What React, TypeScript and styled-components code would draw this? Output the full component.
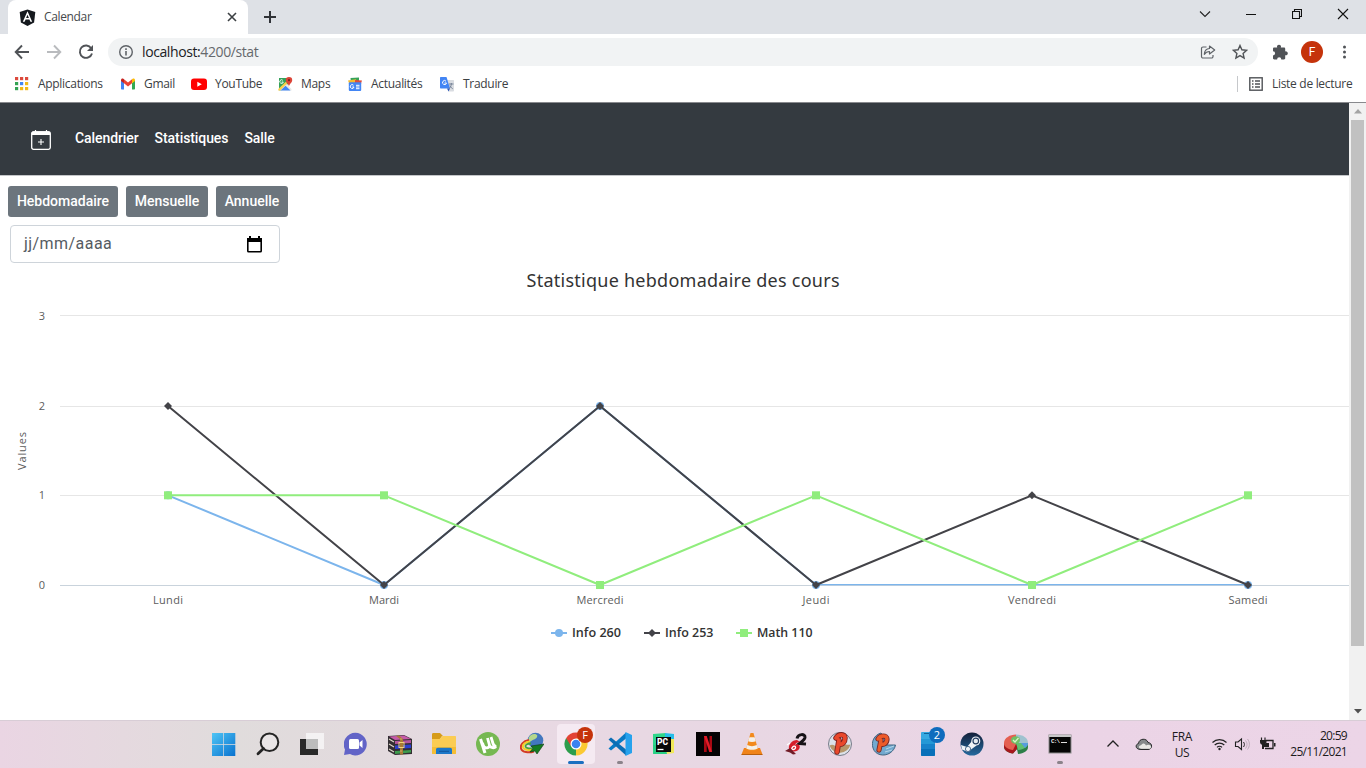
import React from 'react';
import styled, { createGlobalStyle } from 'styled-components';

const ui = "'Open Sans', 'Noto Sans', sans-serif";
const web = "Roboto, 'Liberation Sans', sans-serif";

const GlobalStyle = createGlobalStyle`
  * { box-sizing: border-box; }
  body { margin: 0; overflow: hidden; background: #fff; }
  svg { display: block; flex: none; }
`;

const Screen = styled.div`
  width: 1366px;
  height: 768px;
  display: flex;
  flex-direction: column;
  font-family: ${ui};
  overflow: hidden;
`;

/* ---------- browser chrome ---------- */

const TabStrip = styled.div`
  height: 34px;
  flex: none;
  display: flex;
  align-items: stretch;
  padding-left: 8px;
  background: #dee1e6;
`;
const Tab = styled.div`
  width: 240px;
  display: flex;
  align-items: center;
  padding: 0 11px;
  background: #fff;
  border-radius: 8px 8px 0 0;
`;
const TabTitle = styled.span`
  flex: 1;
  margin-left: 8px;
  padding-bottom: 1px;
  font-size: 12px;
  letter-spacing: -0.35px;
  color: #45484c;
`;
const NewTab = styled.div`
  display: flex;
  align-items: center;
  padding-left: 15px;
`;
const WindowButtons = styled.div`
  margin-left: auto;
  display: flex;
`;
const WindowButton = styled.div<{ $w: number }>`
  width: ${(p) => p.$w}px;
  height: 28px;
  display: flex;
  align-items: center;
  justify-content: center;
`;
const Toolbar = styled.div`
  height: 36px;
  flex: none;
  display: flex;
  align-items: center;
  padding: 0 13px 0 14px;
  background: #fff;
`;
const NavIcons = styled.div`
  display: flex;
  gap: 16px;
  width: 94px;
`;
const Omnibox = styled.div`
  width: 1150px;
  height: 28px;
  display: flex;
  align-items: center;
  padding: 0 10px;
  border-radius: 14px;
  background: #f1f3f4;
`;
const Url = styled.span`
  flex: 1;
  margin-left: 8px;
  padding-bottom: 1px;
  font-size: 14px;
  letter-spacing: -0.4px;
  color: #66696d;
  b { font-weight: 400; color: #202124; }
`;
const OmniActions = styled.div`
  display: flex;
  gap: 16px;
`;
const ToolbarEnd = styled.div`
  display: flex;
  align-items: center;
  margin-left: auto;
`;
const Avatar = styled.div`
  width: 22px;
  height: 22px;
  margin: 0 14px 0 13px;
  border-radius: 50%;
  background: #c5330b;
  color: #fff;
  font: 12px/22px ${web};
  text-align: center;
`;
const Bookmarks = styled.div`
  height: 33px;
  flex: none;
  display: flex;
  align-items: center;
  padding: 0 14px 4px 14px;
  background: #fff;
  border-bottom: 1px solid #88898d;
`;
const Bookmark = styled.div<{ $w: number }>`
  width: ${(p) => p.$w}px;
  display: flex;
  align-items: center;
  gap: 8px;
  white-space: nowrap;
  font-size: 12px;
  letter-spacing: -0.3px;
  color: #3c4043;
`;
const BookmarkName = styled.span`
  padding-bottom: 2px;
`;
const ReadingList = styled(Bookmark)`
  margin-left: auto;
  padding-left: 10px;
  height: 16px;
  border-left: 1px solid #c6c8cb;
`;

/* ---------- page ---------- */

const Viewport = styled.div`
  height: 617px;
  flex: none;
  display: flex;
`;
const Page = styled.main`
  width: 1349px;
  background: #fff;
  overflow: hidden;
  font-family: ${web};
`;
const Navbar = styled.nav`
  height: 73px;
  display: flex;
  align-items: center;
  gap: 16px;
  padding: 0 0 2px 31px;
  background: #343a40;
  border-bottom: 1px solid #c4c6c9;
`;
const Brand = styled.div`
  width: 28px;
  padding-top: 3px;
`;
const NavLink = styled.a`
  color: #fff;
  font-size: 14px;
  font-weight: 500;
  letter-spacing: -0.08px;
`;
const Buttons = styled.div`
  display: flex;
  gap: 8px;
  padding: 10px 8px 8px;
`;
const Button = styled.button<{ $w: number }>`
  width: ${(p) => p.$w}px;
  height: 31px;
  padding: 0 0 1px;
  border: 0;
  border-radius: 3px;
  background: #6c757d;
  color: #fff;
  font: 500 14px/29px ${web};
`;
const DateField = styled.div`
  width: 270px;
  height: 38px;
  margin-left: 10px;
  display: flex;
  align-items: center;
  justify-content: space-between;
  padding: 0 17px 0 13px;
  border: 1px solid #ced4da;
  border-radius: 4px;
`;
const DateText = styled.span`
  padding-bottom: 1px;
  font-size: 16px;
  letter-spacing: 0.45px;
  color: #555b62;
`;
const Scrollbar = styled.div`
  width: 17px;
  display: flex;
  flex-direction: column;
  align-items: center;
  background: #f1f1f1;
`;
const Arrow = styled.div`
  height: 17px;
  display: flex;
  align-items: center;
`;
const Thumb = styled.div`
  width: 13px;
  height: 526px;
  margin-bottom: auto;
  background: #c1c1c1;
`;

/* ---------- taskbar ---------- */

const Taskbar = styled.footer`
  height: 48px;
  flex: none;
  display: flex;
  padding-left: 202px;
  background: linear-gradient(90deg, #ead5e3 0%, #e5d9df 9%, #e0dcdc 17%, #e2dadd 26%, #e8d9e3 38%, #e8d7e3 55%, #ebd4e6 80%, #ecd5e7 100%);
  box-shadow: inset 0 1px #d8cdd6;
`;
const Task = styled.div<{ $active?: boolean }>`
  position: relative;
  width: 38px;
  height: 40px;
  margin: 4px 3px;
  display: flex;
  align-items: center;
  justify-content: center;
  border-radius: 4px;
  background: ${(p) => (p.$active ? '#f5eaf2' : 'transparent')};
`;
const Running = styled.i<{ $active?: boolean }>`
  position: absolute;
  left: 50%;
  bottom: 0;
  width: ${(p) => (p.$active ? 16 : 6)}px;
  height: 3px;
  transform: translateX(-50%);
  border-radius: 2px;
  background: ${(p) => (p.$active ? '#1a6fc0' : '#8b838a')};
`;
const Badge = styled.span<{ $bg: string }>`
  position: absolute;
  top: 3px;
  right: 2px;
  width: 16px;
  height: 16px;
  border-radius: 50%;
  background: ${(p) => p.$bg};
  color: #fff;
  font: 11px/16px ${ui};
  text-align: center;
`;
const Tray = styled.div`
  margin-left: auto;
  display: flex;
  align-items: center;
  padding-right: 19px;
  color: #1d1b1d;
`;
const Language = styled.div`
  width: 28px;
  margin-right: 16px;
  padding-top: 2px;
  text-align: center;
  font-size: 12px;
  line-height: 16px;
  letter-spacing: -0.3px;
`;
const Clock = styled.div`
  width: 71px;
  text-align: right;
  white-space: nowrap;
  font-size: 12px;
  line-height: 16px;
  letter-spacing: -0.7px;
`;

type IconProps = { w?: number; h?: number; box?: string; children: React.ReactNode };
const Icon = ({ w = 16, h = w, box = `0 0 ${w} ${h}`, children }: IconProps) => (
  <svg width={w} height={h} viewBox={box} fill="none">{children}</svg>
);

const AngularLogo = () => (
  <Icon w={17} h={17}>
    <path d="M8.5.4 16.3 3l-1.2 10.4-6.6 3.5-6.6-3.500L.7 3Z" fill="#15191e" />
    <path d="m8.500 2.300-4.700 10.500h1.800l1-2.400h3.800l1 2.400h1.800L8.500 2.300Zm0 3.400 1.400 3.300H7.100Z" fill="#fff" />
  </Icon>
);

const appColors = ['#dc4a3d', '#dc4a3d', '#dc4a3d', '#34a253', '#4285f4', '#f2b818', '#34a253', '#f2b818', '#f2b818'];

const AppsIcon = () => (
  <Icon w={16}>
    {appColors.map((c, i) => (
      <rect key={i} x={1 + (i % 3) * 5} y={1 + Math.floor(i / 3) * 5} width="3.2" height="3.2" fill={c} />
    ))}
  </Icon>
);
const GmailIcon = () => (
  <Icon w={16}>
    <path d="M1 4v8.500c0 .6.4 1 1 1h2V7Z" fill="#4285f4" />
    <path d="M15 4v8.500c0 .6-.4 1-1 1h-2V7Z" fill="#34a853" />
    <path d="M4 3.300 8 6.400l4-3.100v4L8 10.400 4 7.300Z" fill="#ea4335" />
    <path d="M1 4c0-1.500 1.600-2 2.600-1.100L4 3.300v4L1 5Z" fill="#c5221f" />
    <path d="M15 4c0-1.500-1.600-2-2.600-1.100l-.4.4v4L15 5Z" fill="#fbbc04" />
  </Icon>
);
const YouTubeIcon = () => (
  <Icon w={16}>
    <rect y="2.500" width="16" height="11.500" rx="3" fill="#f00" />
    <path d="m6.300 5.700 4.500 2.500-4.500 2.600Z" fill="#fff" />
  </Icon>
);
const MapsIcon = () => (
  <Icon w={16}>
    <path d="M2 2h10v5L4 14.500H2Z" fill="#34a15a" />
    <path d="m1.500 14 7-7 6 6v1.500h-13Z" fill="#e9e9e5" />
    <path d="m3.500 14.500 5-4.800 5 4.800Z" fill="#4285f4" />
    <path d="m1.300 13 7.500-7.300 1.500 1.500L3 14.500H1.300Z" fill="#fbd04a" />
    <path d="M5.800 4.300A1.800 1.800 0 1 0 6.300 6H4.700" stroke="#fff" strokeWidth=".9" />
    <path d="M12 1a3.200 3.200 0 0 1 3.200 3.300c0 2.300-2.500 3-3.200 6.200-.7-3.200-3.200-3.900-3.200-6.200A3.200 3.200 0 0 1 12 1Z" fill="#dc4437" />
    <circle cx="12" cy="4.200" r="1.100" fill="#7b211a" />
  </Icon>
);
const NewsIcon = () => (
  <Icon w={16}>
    <path d="m3.500 2 8.500-.5V7H4Z" fill="#36a35a" />
    <path d="m1 4.500 8-1.200.5 4H2Z" fill="#f5bb2d" />
    <path d="m8 4 7 .4L13.500 9H8Z" fill="#de4b3c" />
    <rect x="1.800" y="6.200" width="12.400" height="8.800" rx="1" fill="#4285f4" />
    <path d="M6.500 9.200A1.900 1.900 0 1 0 7 11H5.300M9 9.300h3.500M9 11h3.500M9 12.700h3.500" stroke="#fff" />
  </Icon>
);
const TranslateIcon = () => (
  <Icon w={16}>
    <path d="M7 4h7c.7 0 1 .3 1 1v9.500c0 .5-.4 1-1 1H9.500Z" fill="#d9dce1" />
    <path d="M2 1h5.500L11 12.500H2c-.6 0-1-.4-1-1V2c0-.6.4-1 1-1Z" fill="#4285f4" />
    <path d="M8 12.500h3l-1.500 3Z" fill="#2d57b8" />
    <path d="M7 5.200A2 2 0 1 0 7.500 7H5.500" stroke="#fff" />
    <path d="M10 8h4.500M12.300 7v1c0 2-1 3.500-2 4.500M10.800 9.500c.8 1.500 2 2.800 3 3.300" stroke="#64748c" strokeWidth=".8" />
  </Icon>
);

/* ---------- chart ---------- */

const days = ['Lundi', 'Mardi', 'Mercredi', 'Jeudi', 'Vendredi', 'Samedi'];
const dayWidths = [30, 30, 47, 27, 48, 39];
const levels = [585, 495.3, 406, 315.8];
const px = (i: number) => 168 + i * 216;

type Shape = 'circle' | 'diamond' | 'square';
type Series = { name: string; color: string; shape: Shape; data: number[]; x: number; w: number };
const series: Series[] = [
  { name: 'Info 260', color: '#7cb5ec', shape: 'circle', data: [1, 0, 2, 0, 0, 0], x: 559, w: 49 },
  { name: 'Info 253', color: '#434348', shape: 'diamond', data: [2, 0, 2, 0, 1, 0], x: 652, w: 48.5 },
  { name: 'Math 110', color: '#90ed7d', shape: 'square', data: [1, 1, 0, 1, 0, 1], x: 744, w: 55.5 },
];

const Marker = ({ x, y, shape, color }: { x: number; y: number; shape: Shape; color: string }) => {
  if (shape === 'circle') return <circle cx={x} cy={y} r="4" fill={color} />;
  if (shape === 'diamond') return <path d={`M${x} ${y - 4}l4 4-4 4-4-4Z`} fill={color} />;
  return <rect x={x - 4} y={y - 4} width="8" height="8" fill={color} />;
};

const ChartSvg = styled.svg`
  font-family: 'Open Sans', 'Noto Sans', sans-serif;
  font-size: 11px;
  fill: #5c5c5c;
`;

const Chart = () => (
  <ChartSvg width="1349" height="400" viewBox="0 263 1349 400">
    <defs>
      <clipPath id="plot"><rect x="60" y="300" width="1289" height="285.200" /></clipPath>
    </defs>
    <text x="526.500" y="287" fontSize="18" fill="#333" textLength="313" fontFamily="'Noto Sans', sans-serif">
      Statistique hebdomadaire des cours
    </text>
    {[585.5, 495.5, 406.5, 315.5].map((y, v) => (
      <g key={v}>
        <path d={`M60 ${y}H1349`} stroke={v ? '#e6e6e6' : '#c9d3dc'} />
        <text x="45" y={Math.floor(y) + (v === 3 ? 5 : 4)} textAnchor="end">{v}</text>
      </g>
    ))}
    <text transform="translate(26 470) rotate(-90)" textLength="38">Values</text>
    {days.map((d, i) => (
      <text key={d} x={px(i) - dayWidths[i] / 2} y="604" textLength={dayWidths[i]}>{d}</text>
    ))}
    {series.map((s) => (
      <g key={s.name}>
        <polyline
          points={s.data.map((v, i) => `${px(i)},${levels[v]}`).join(' ')}
          fill="none"
          stroke={s.color}
          strokeWidth="2"
          strokeLinejoin="round"
          clipPath="url(#plot)"
        />
        {s.data.map((v, i) => (
          <Marker key={i} x={px(i)} y={levels[v]} shape={s.shape} color={s.color} />
        ))}
        <path d={`M${s.x - 8} 633h16`} stroke={s.color} strokeWidth="2" />
        <Marker x={s.x} y={633} shape={s.shape} color={s.color} />
        <text x={s.x + 13} y="637" fontSize="12" fontWeight="600" fill="#333" textLength={s.w} lengthAdjust="spacingAndGlyphs">
          {s.name}
        </text>
      </g>
    ))}
  </ChartSvg>
);

/* ---------- taskbar drawings ---------- */

const WindowsIcon = () => (
  <Icon w={24}>
    <defs>
      <linearGradient id="win" x1="0" y1="0" x2="1" y2="1">
        <stop stopColor="#4fc5f5" />
        <stop offset="1" stopColor="#0872cf" />
      </linearGradient>
    </defs>
    <path d="M0 1h11.300v11H0ZM12 1h11.300v11H12ZM0 12.700h11.300V24H0ZM12 12.700h11.300V24H12Z" fill="url(#win)" />
  </Icon>
);
const SearchIcon = () => (
  <Icon w={24}>
    <circle cx="13.500" cy="10.200" r="8.800" fill="#e9e5e6" stroke="#242424" strokeWidth="2" />
    <path d="m7.500 16.500-5.500 5.300" stroke="#242424" strokeWidth="2.800" strokeLinecap="round" />
  </Icon>
);
const TaskViewIcon = () => (
  <Icon w={24}>
    <rect x="0" y="7" width="18" height="16" fill="#292929" />
    <rect x="6" y="1" width="18" height="16" fill="#f4f2f3" />
    <rect x="6" y="7" width="12" height="10" fill="#bcbcbc" />
  </Icon>
);
const ChatIcon = () => (
  <Icon w={24}>
    <path d="M11.500.800A11.300 11.300 0 1 1 6 22L0 23l1-5.500A11.500 11.500 0 0 1 11.500.800Z" fill="#6264c7" />
    <rect x="5" y="7" width="10" height="10" rx="1.500" fill="#fff" />
    <path d="m15.500 10.500 3-2.500v8l-3-2.500Z" fill="#fff" />
  </Icon>
);
const WinrarIcon = () => (
  <Icon w={26} h={24}>
    <path d="m1 4 16-1 8 4v15l-17 1-7-4Z" fill="#332e33" />
    <path d="m2 4.500 15-1 7 3.500-16 1Z" fill="#c55aa8" />
    <path d="M8 9l16-1v3L8 12Z" fill="#b5559d" />
    <path d="M8 13.500l16-1V16L8 17Z" fill="#2b3fd0" />
    <path d="M8 19l16-1v2.500L8 22Z" fill="#3d9b4d" />
    <path d="m2 7 5 3M2 12l5 3M2 17l5 3" stroke="#ddd7c8" strokeWidth="1.200" />
    <path d="M12 3.500 16 7v15.500h-3V7L9 4Z" fill="#a97b35" />
    <rect x="12" y="10.500" width="5" height="5" stroke="#f0d27b" />
    <path d="M13.500 7h2M13.500 19h2" stroke="#f0e3a6" strokeDasharray="1 1" />
  </Icon>
);
const FolderIcon = () => (
  <Icon w={24}>
    <path d="M0 2.500c0-1 .5-1.500 1.500-1.500H8l3 3h-1L8 7H0Z" fill="#d69b19" />
    <path d="M0 7h7.500l3-3H23c.7 0 1 .4 1 1v16c0 .6-.4 1-1 1H1c-.6 0-1-.4-1-1Z" fill="#fbcc53" />
    <path d="M0 15h24v6c0 .6-.4 1-1 1H1c-.6 0-1-.4-1-1Z" fill="#f5bd35" />
    <path d="M4 22v-4.500c0-1 .8-1.800 1.800-1.800h12.400c1 0 1.800.8 1.800 1.800V22Z" fill="#1c77c8" />
    <path d="M7 19.300h10" stroke="#12549b" />
  </Icon>
);
const TorrentIcon = () => (
  <Icon w={24}>
    <circle cx="12" cy="12" r="12" fill="#76b852" />
    <path d="m4.500 7 4.500 14" stroke="#fff" strokeWidth="3" />
    <path d="m6.500 11 .8 2.500c1.200 3.800 7 2.800 6-1L11.500 6M13.500 13.500c1.300 2.500 4.500 3 6.500 1.300M15 5l2 6.500c.5 1.700 1.700 3 3.500 2.800" stroke="#fff" strokeWidth="2.800" />
  </Icon>
);
const IdmIcon = () => (
  <Icon w={24}>
    <circle cx="15.500" cy="8.500" r="7.800" fill="#4277be" />
    <path d="M11 3c2-1.500 5-1.500 6 0s-1 4-3 4.500-4 3-5 2-.5-5 2-6.500Z" fill="#b4d78c" />
    <path d="M9 8C3 9 0 13 1 16.500c1 4 8 4.500 13 3" stroke="#d33b24" strokeWidth="2" />
    <path d="M10 9.500c-5 .5-7.500 3-7 5.500C3.500 18 9 18.500 13 17.500" stroke="#f3cf29" strokeWidth="2" />
    <path d="M11 11.500c-4 0-6 1.500-5.500 3S9 17 12 16" stroke="#45a33a" strokeWidth="1.800" />
    <path d="m11 14 13-2-7 10-2-3-5 1 3-4Z" fill="#147c20" stroke="#0e3916" strokeWidth=".6" />
  </Icon>
);
const ChromeIcon = () => (
  <Icon w={24}>
    <path d="M12 12 2.040 6.250A11.500 11.500 0 0 1 21.960 6.250Z" fill="#e34335" />
    <path d="M12 12V23.500A11.500 11.500 0 0 1 2.040 6.250Z" fill="#2d9d4c" />
    <path d="M12 12 21.960 6.250A11.500 11.500 0 0 1 12 23.500Z" fill="#fbc933" />
    <path d="M12 6.500h10L17 15Z" fill="#fbc933" />
    <path d="M2.040 6.250 7.200 15 12 6.500Z" fill="#e34335" />
    <path d="m2.040 6.250 5.200 8.500 4.800 3-3 5.200Z" fill="#2d9d4c" />
    <circle cx="12" cy="12" r="5.500" fill="#fff" />
    <circle cx="12" cy="12" r="4.300" fill="#3b82ef" />
  </Icon>
);
const CodeIcon = () => (
  <Icon w={24}>
    <path d="m18 6.500-15 12-2.500-2L18 .5Z" fill="#087bc5" />
    <path d="M18 17.500 3 5.500.5 7.500 18 23.500Z" fill="#0a6eb5" />
    <path d="m17.500 0 6.500 3v18l-6.500 3V0Z" fill="#26a2ed" />
  </Icon>
);
const PyCharmIcon = () => (
  <Icon w={24}>
    <path d="M1 2 14 1 9 22H1Z" fill="#2fd68b" />
    <path d="m13 1 9 1v8l-9-1Z" fill="#25bde8" />
    <path d="M22 7v14l-8 1 3-15Z" fill="#f0e858" />
    <path d="M1 13h12l2 9H2Z" fill="#28cf84" />
    <rect x="4" y="5" width="15" height="15" fill="#080808" />
    <text x="5" y="12.500" fontFamily="Roboto, sans-serif" fontSize="8.500" fontWeight="900" fill="#fff">PC</text>
    <path d="M5.500 17.500h6" stroke="#fff" strokeWidth="1.300" />
  </Icon>
);
const NetflixIcon = () => (
  <Icon w={24}>
    <rect width="24" height="24" fill="#050304" />
    <path d="M8 4h2.700v16H8ZM13.500 4H16v16h-2.500Z" fill="#a80913" />
    <path d="M8 4h2.700L16 20h-2.700Z" fill="#e21b27" />
  </Icon>
);
const VlcIcon = () => (
  <Icon w={24}>
    <path d="M4 16h16l2.500 6.500h-21Z" fill="#f08319" />
    <path d="m10.500 1h3l4.500 16.500c-3 2-9 2-12 0Z" fill="#f28a1c" />
    <path d="m9.400 5.200h5.200l1.200 4c-2 1-5.600 1-7.600 0ZM7.200 13c3 1.500 6.600 1.500 9.600 0l1 3.500c-3 1.700-8.600 1.700-11.600 0Z" fill="#f4f1e9" />
    <path d="M1.500 22.500h21" stroke="#b85f0d" />
  </Icon>
);
const RedGameIcon = () => (
  <Icon w={24}>
    <path d="M13 6.500c1-5 8.500-5 8-1-.4 2.500-3 4-5.500 6l6.500.5" stroke="#171317" strokeWidth="3" />
    <path d="M13 8c-5 0-9 5-8 8.500.5 2 2 3 5 3 5 0 7-4.500 5-6.500-1-1-3-1-4 0 .5-2 3-3 5-3Z" fill="#d51e2b" />
    <path d="M8 16c1-2 3-2.500 3.500-1s-1 2.500-2.500 2.500c-1 0-1.500-.8-1-1.500ZM6 11l-3 2" stroke="#fff" strokeWidth="1.300" />
    <path d="m1 19 5-3 6 6-3 .5-3-2Z" fill="#711b26" />
  </Icon>
);
const BallIcon = () => (
  <Icon w={24}>
    <circle cx="12" cy="12" r="11.500" fill="#dce2e9" stroke="#777c8a" />
    <path d="M1.500 13.500c5-3 5 3 10 0s6 0 11-1A11 11 0 0 1 1.500 13.500Z" fill="#b6976b" />
    <path d="M9 20 11 8M8 6c3-4.500 9-4 9 0 0 4.500-3 7-6 6" stroke="#7d2222" strokeWidth="5.500" strokeLinecap="round" />
    <path d="M9 20 11 8M8 6c3-4.500 9-4 9 0 0 4.500-3 7-6 6" stroke="#e9482b" strokeWidth="3.800" strokeLinecap="round" />
  </Icon>
);
const BallDeluxeIcon = () => (
  <Icon w={24}>
    <path d="M9 1C2 3-1 10 1 16c2 7 11 9 17 5 3-2 5-5 5.500-8H14V8Z" fill="#72a9cf" stroke="#426681" />
    <path d="M7 18 9 8M6 7c2-4 9-4 9 0 0 4-3 6-6 5" stroke="#772a2b" strokeWidth="5.200" strokeLinecap="round" />
    <path d="M7 18 9 8M6 7c2-4 9-4 9 0 0 4-3 6-6 5" stroke="#ed5b2a" strokeWidth="3.400" strokeLinecap="round" />
    <path d="m14 17 8-3M13 20l7-2" stroke="#b6d6e8" />
  </Icon>
);
const PhoneIcon = () => (
  <Icon w={24}>
    <rect x="5" y="0" width="14" height="24" rx="1" fill="#37a9e1" />
    <path d="M5 7h14v6H5Z" fill="#2498d6" />
    <path d="M5 12h14v6H5Z" fill="#1782ca" />
    <path d="M5 17h14v6a1 1 0 0 1-1 1H6a1 1 0 0 1-1-1Z" fill="#0870b9" />
    <path d="M8 1.500h5" stroke="#126297" />
  </Icon>
);
const SteamIcon = () => (
  <Icon w={24}>
    <defs>
      <linearGradient id="steam" x2="0" y2="1">
        <stop stopColor="#142039" />
        <stop offset="1" stopColor="#24699e" />
      </linearGradient>
    </defs>
    <circle cx="12" cy="12" r="11.500" fill="url(#steam)" />
    <path d="m1 13 6 2 5-6 4.500 4.500-5.500 4-3 2.500-6-2.500Z" fill="#f1f4f7" />
    <circle cx="15.800" cy="9" r="4.500" fill="#f1f4f7" />
    <circle cx="15.800" cy="9" r="2.800" fill="#e8edf1" stroke="#243e60" strokeWidth="1.200" />
    <circle cx="8" cy="17" r="2.600" fill="#f1f4f7" stroke="#284e75" strokeWidth=".8" />
  </Icon>
);
const PieIcon = () => (
  <Icon w={26} h={24}>
    <path d="M1 11v4c0 3 4 6 9 6.500l4-4.500 1 5c6-.5 10-3 10-7v-4Z" fill="#2c7f48" />
    <path d="M1 11v4c0 3 4 6 9 6.500l4-4.500v-4Z" fill="#a8171c" />
    <path d="M1 11c0-5 6-8.500 12-8.500V12l-3 6c-5-.5-9-3-9-7Z" fill="#e45f51" />
    <path d="M13 2.500c7 0 12 3.500 12 8.500H13Z" fill="#9fc2cf" />
    <path d="M25 11c0 4-4 6.500-10 7l-2-7Z" fill="#5fc071" />
    <path d="m18 11 7 0c0 2-1 3.500-3 5Z" fill="#579cde" />
    <ellipse cx="12.500" cy="8" rx="4.500" ry="3.800" fill="#6fbf65" />
    <path d="m10 8 2 2 3.500-4" stroke="#d8f5c8" strokeWidth="1.300" />
  </Icon>
);
const TerminalIcon = () => (
  <Icon w={24}>
    <rect x="1" y="3" width="22" height="18" fill="#050505" stroke="#8b8b8b" />
    <path d="M1 4h22" stroke="#c8c8c8" strokeWidth="2" />
    <text x="3" y="11" fontFamily="'Liberation Mono', monospace" fontWeight="700" fontSize="6" textLength="9" fill="#eee">C:\</text>
    <path d="M13 10.500h6" stroke="#ddd" />
  </Icon>
);

const tasks: { Art: () => React.ReactElement; active?: boolean; running?: boolean; badge?: string; badgeColor?: string }[] = [
  { Art: WindowsIcon }, { Art: SearchIcon }, { Art: TaskViewIcon }, { Art: ChatIcon },
  { Art: WinrarIcon }, { Art: FolderIcon }, { Art: TorrentIcon }, { Art: IdmIcon },
  { Art: ChromeIcon, active: true, running: true, badge: 'F', badgeColor: '#c5330b' },
  { Art: CodeIcon, running: true }, { Art: PyCharmIcon }, { Art: NetflixIcon }, { Art: VlcIcon },
  { Art: RedGameIcon }, { Art: BallIcon }, { Art: BallDeluxeIcon },
  { Art: PhoneIcon, badge: '2', badgeColor: '#0f6cbd' },
  { Art: SteamIcon }, { Art: PieIcon }, { Art: TerminalIcon, running: true },
];

const bookmarks: { name: string; w: number; Art: () => React.ReactElement }[] = [
  { name: 'Applications', w: 106, Art: AppsIcon },
  { name: 'Gmail', w: 71, Art: GmailIcon },
  { name: 'YouTube', w: 86, Art: YouTubeIcon },
  { name: 'Maps', w: 70, Art: MapsIcon },
  { name: 'Actualités', w: 92, Art: NewsIcon },
  { name: 'Traduire', w: 80, Art: TranslateIcon },
];

const BrowserChrome = () => (
  <>
    <TabStrip>
      <Tab>
        <AngularLogo />
        <TabTitle>Calendar</TabTitle>
        <Icon w={10}><path d="m1 1 8 8M9 1 1 9" stroke="#3c4043" strokeWidth="1.600" /></Icon>
      </Tab>
      <NewTab>
        <Icon w={14}><path d="M7 1v12M1 7h12" stroke="#303338" strokeWidth="2" /></Icon>
      </NewTab>
      <WindowButtons>
        <WindowButton $w={46}><Icon w={12}><path d="m1 3.500 5 5 5-5" stroke="#222" strokeWidth="1.100" /></Icon></WindowButton>
        <WindowButton $w={46}><Icon w={10}><path d="M0 5.500h10" stroke="#111" /></Icon></WindowButton>
        <WindowButton $w={46}><Icon w={10}><path d="M.5 2.500h7v7h-7ZM2.500 2.500v-2h7v7h-2" stroke="#111" strokeWidth="1.100" /></Icon></WindowButton>
        <WindowButton $w={46}><Icon w={12}><path d="m1 1 10 10M11 1 1 11" stroke="#111" strokeWidth="1.100" /></Icon></WindowButton>
      </WindowButtons>
    </TabStrip>
    <Toolbar>
      <NavIcons>
        <Icon w={16}><path d="M15 8H2M8 1.500 1.700 8 8 14.500" stroke="#505357" strokeWidth="1.900" /></Icon>
        <Icon w={16}><path d="M1 8h13M8 1.500 14.300 8 8 14.500" stroke="#b9bbbe" strokeWidth="1.900" /></Icon>
        <Icon w={16}>
          <path d="M13.200 4.200A6.200 6.200 0 1 0 14 9.500" stroke="#505357" strokeWidth="1.900" />
          <path d="M15 1v6H9Z" fill="#505357" />
        </Icon>
      </NavIcons>
      <Omnibox>
        <Icon w={16}>
          <circle cx="8" cy="8" r="6.300" stroke="#5f6368" strokeWidth="1.400" />
          <path d="M8 7v4.500M8 4.300v1.600" stroke="#5f6368" strokeWidth="1.600" />
        </Icon>
        <Url><b>localhost:</b>4200/stat</Url>
        <OmniActions>
          <Icon w={16}>
            <path d="M6.500 3H3a1.500 1.500 0 0 0-1.500 1.500v8A1.500 1.500 0 0 0 3 14h8.500a1.500 1.500 0 0 0 1.500-1.500V11" stroke="#5f6368" strokeWidth="1.200" />
            <path d="M9.500 2 14.700 6l-5.200 4V7.500C7 7.500 5.500 8.500 4.300 10.300 4.500 7 6.500 4.800 9.500 4.500Z" stroke="#5f6368" strokeWidth="1.200" strokeLinejoin="round" />
          </Icon>
          <Icon w={16}>
            <path d="m8 1.500 1.900 4.300 4.700.5-3.500 3.100 1 4.600L8 11.600 3.900 14l1-4.600-3.500-3.100 4.700-.5Z" stroke="#505357" strokeWidth="1.400" />
          </Icon>
        </OmniActions>
      </Omnibox>
      <ToolbarEnd>
        <Icon w={16}>
          <path d="M1 4.800c0-.8.500-1.300 1.300-1.300h2.900a2 2 0 1 1 3.600 0H12c.7 0 1.200.5 1.200 1.200v2.700a2 2 0 1 1 0 3.800v3c0 .7-.5 1.200-1.200 1.200H9.300a2.100 2.100 0 0 0-4.200 0H2.300c-.8 0-1.300-.5-1.300-1.200v-2.800a2.100 2.100 0 0 0 0-4.200Z" fill="#505357" />
        </Icon>
        <Avatar>F</Avatar>
        <Icon w={16}>
          <circle cx="7.500" cy="3" r="1.500" fill="#505357" />
          <circle cx="7.500" cy="8" r="1.500" fill="#505357" />
          <circle cx="7.500" cy="13" r="1.500" fill="#505357" />
        </Icon>
      </ToolbarEnd>
    </Toolbar>
    <Bookmarks>
      {bookmarks.map(({ name, w, Art }) => (
        <Bookmark key={name} $w={w}><Art /><BookmarkName>{name}</BookmarkName></Bookmark>
      ))}
      <ReadingList $w={115}>
        <Icon w={16}>
          <rect x="1.800" y="1.800" width="12.400" height="12.400" stroke="#505357" strokeWidth="1.400" />
          <path d="M4 5h1.500M7 5h5M4 8h1.500M7 8h5M4 11h1.500M7 11h5" stroke="#505357" strokeWidth="1.400" />
        </Icon>
        <BookmarkName>Liste de lecture</BookmarkName>
      </ReadingList>
    </Bookmarks>
  </>
);

export default function App() {
  return (
    <Screen>
      <GlobalStyle />
      <BrowserChrome />
      <Viewport>
        <Page>
          <Navbar>
            <Brand>
              <Icon w={20} h={20}>
                <path d="M2.500 1.200h15c1.200 0 2 .8 2 2V5H.5V3.200c0-1.200.8-2 2-2Z" fill="#fff" />
                <path d="M4.500 0v2M15.500 0v2" stroke="#fff" strokeWidth="1.200" />
                <rect x=".700" y="2" width="18.600" height="17.300" rx="1.800" stroke="#fff" strokeWidth="1.300" />
                <path d="M10 9v6M7 12h6" stroke="#fff" strokeWidth="1.100" />
              </Icon>
            </Brand>
            <NavLink>Calendrier</NavLink>
            <NavLink>Statistiques</NavLink>
            <NavLink>Salle</NavLink>
          </Navbar>
          <Buttons>
            <Button $w={110}>Hebdomadaire</Button>
            <Button $w={82}>Mensuelle</Button>
            <Button $w={72}>Annuelle</Button>
          </Buttons>
          <DateField>
            <DateText>jj/mm/aaaa</DateText>
            <Icon w={15} h={17}>
              <path d="M0 2h15v4H0ZM2 0h2v3H2ZM11 0h2v3h-2Z" fill="#000" />
              <rect x=".8" y="3" width="13.400" height="12.700" rx=".8" stroke="#000" strokeWidth="1.600" />
            </Icon>
          </DateField>
          <Chart />
        </Page>
        <Scrollbar>
          <Arrow><Icon w={8} h={5}><path d="m4 0 4 4.500H0Z" fill="#a3a3a3" /></Icon></Arrow>
          <Thumb />
          <Arrow><Icon w={8} h={5}><path d="M4 4.500 8 0H0Z" fill="#505050" /></Icon></Arrow>
        </Scrollbar>
      </Viewport>
      <Taskbar>
        {tasks.map(({ Art, active, running, badge, badgeColor }, i) => (
          <Task key={i} $active={active}>
            <Art />
            {badge && <Badge $bg={badgeColor!}>{badge}</Badge>}
            {running && <Running $active={active} />}
          </Task>
        ))}
        <Tray>
          <Icon w={14}><path d="m1.500 9.500 5.500-5.500 5.500 5.500" stroke="#222" strokeWidth="1.300" /></Icon>
          <Icon w={48} h={16} box="-24 0 48 16">
            <path d="M-3 13.500c-6 0-6-5-2.500-6C-5 2 3 2 4 6.500c5 .5 4.500 7 0 7Z" fill="#85898a" stroke="#252728" />
            <path d="M-2.500 12.800c-3 0-3.500-3-.5-3.500 2-3 4-2 5 .2 2-1.500 5-.5 5 1.200s-1 2.100-2 2.100Z" fill="#e8e8e4" />
          </Icon>
          <Language>FRA<br />US</Language>
          <Icon w={64} h={16}>
            <path d="M.5 6.500a10 10 0 0 1 14 0M2.700 9a7 7 0 0 1 9.600 0M5 11.300a3.500 3.500 0 0 1 5 0" stroke="#222" strokeWidth="1.200" />
            <circle cx="7.500" cy="13" r="1.200" fill="#222" />
            <path d="M23.500 6H26l3.500-3v10.500L26 10.500h-2.500Z" stroke="#222" strokeWidth="1.100" />
            <path d="M31.500 6c1.200 1.500 1.200 3.500 0 5" stroke="#222" />
            <path d="M33.500 4.500c2 2.500 2 5.500 0 8M35.500 3c2.500 3 2.500 7.500 0 10.500" stroke="#bbaab7" />
            <path d="M54 4.500h7v8h-8" stroke="#222" strokeWidth="1.300" />
            <path d="M62 7h1.500v3.500H62ZM54 7h3v4h-5v2h-2V8h4Z" fill="#222" />
            <path d="M49.500 1.500v3M53 1.500v3" stroke="#222" strokeWidth="1.200" />
            <path d="M48 4h6.500v2c0 2-1.500 3-3.200 3S48 8 48 6Z" fill="#222" />
          </Icon>
          <Clock>20:59<br />25/11/2021</Clock>
        </Tray>
      </Taskbar>
    </Screen>
  );
}
